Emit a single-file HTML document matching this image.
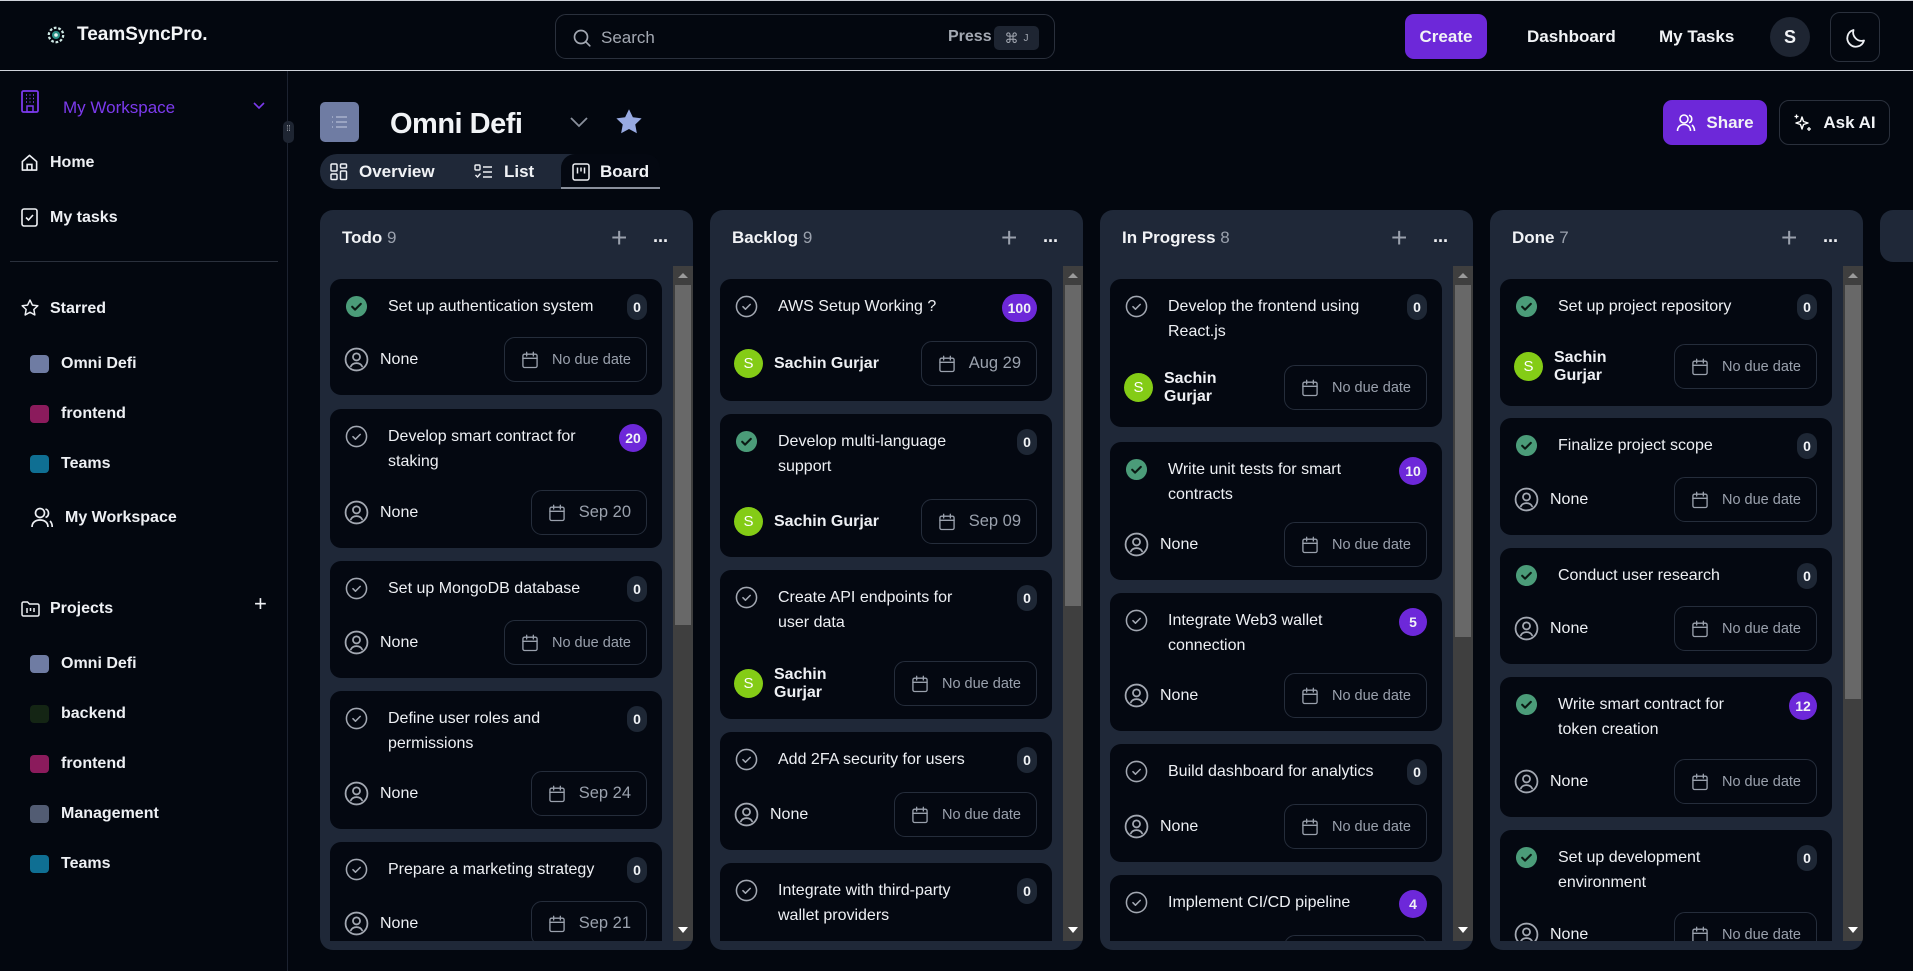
<!DOCTYPE html>
<html><head><meta charset="utf-8">
<style>
*{box-sizing:border-box;margin:0;padding:0}
body{width:1913px;height:971px;overflow:hidden;background:#03070f;font-family:"Liberation Sans",sans-serif;color:#f1f3f6;position:relative}
.abs{position:absolute}
.hdr{position:absolute;left:0;top:0;width:1913px;height:71px;border-top:1px solid #cfd3da;border-bottom:1px solid #cfd3da;background:#03070f}
.side{position:absolute;left:0;top:71px;width:288px;height:900px;border-right:1px solid #1c2230}
.si{position:absolute;display:flex;align-items:center;font-weight:bold;font-size:16px;color:#eef0f4}
.sq{width:19px;height:18px;border-radius:4px;margin-right:12px}
.col{position:absolute;top:210px;width:373px;height:740px;background:#1f2838;border-radius:13px;overflow:hidden}
.ch{position:absolute;left:22px;top:18px;font-size:17px;font-weight:bold}
.ch span{color:#9aa1ad;font-weight:normal}
.cards{position:absolute;left:10px;top:56px;width:333px;height:675px;overflow:hidden}
.sb{position:absolute;left:353px;top:56px;width:20px;height:675px;background:#3f3f3f}
.sb .th{position:absolute;left:2px;width:16px;background:#686868}
.card{position:absolute;left:0;width:332px;background:#040811;border-radius:11px}
.tr{position:absolute;top:15px;left:15px;right:15px;display:flex;align-items:flex-start}
.ck{width:23px;height:23px;margin-top:1px;flex:none}
.tt{margin-left:20px;flex:1;font-size:16px;line-height:25px;white-space:nowrap;color:#eef0f4}
.bd{flex:none;min-width:20px;height:26px;padding:0 6px;border-radius:13px;background:#1e2735;font-size:14px;font-weight:bold;display:flex;align-items:center;justify-content:center;margin-top:0}
.bd.p{background:#6d28d9;min-width:28px;height:28px;border-radius:14px}
.br{position:absolute;left:14px;right:15px;bottom:13px;height:45px;display:flex;align-items:center;justify-content:space-between}
.who{display:flex;align-items:center;font-size:16px;color:#eef0f4}
.who svg{margin-right:11px}
.av{width:29px;height:29px;border-radius:50%;background:#84cc16;color:#fff;font-size:15px;display:flex;align-items:center;justify-content:center;margin-right:11px;flex:none}
.nm{font-weight:bold;font-size:16px;line-height:18px}
.dt{height:45px;border:1px solid #252d3b;border-radius:11px;display:flex;align-items:center;padding:0 15px;color:#9aa1ad;font-size:14.5px}
.dt.b{font-size:16.5px}
.dt svg{margin-right:12px}
.pl{position:absolute;left:291px;top:12px;font-size:28px;color:#9aa1ad}
.dots{position:absolute;left:333px;top:21px;font-size:18px;font-weight:bold;color:#eef0f4;letter-spacing:-1px}
</style></head><body>
<svg width="0" height="0" style="position:absolute">
<defs>
<symbol id="okg" viewBox="0 0 24 24"><circle cx="12" cy="12" r="11" fill="#4b9c79"/><path d="M7.5 12.3l3 3 6-6" fill="none" stroke="#0b1a14" stroke-width="2.2" stroke-linecap="round" stroke-linejoin="round"/></symbol>
<symbol id="oko" viewBox="0 0 24 24"><circle cx="12" cy="12" r="10.5" fill="none" stroke="#a3a8b2" stroke-width="1.6"/><path d="M8.3 12.2l2.6 2.6 5-5" fill="none" stroke="#a3a8b2" stroke-width="1.6" stroke-linecap="round" stroke-linejoin="round"/></symbol>
<symbol id="per" viewBox="0 0 24 24"><circle cx="12" cy="12" r="10.5" fill="none" stroke="#a3a8b2" stroke-width="1.7"/><circle cx="12" cy="9.5" r="3.4" fill="none" stroke="#a3a8b2" stroke-width="1.7"/><path d="M6.3 19.2c1-2.6 3.2-3.7 5.7-3.7s4.7 1.1 5.7 3.7" fill="none" stroke="#a3a8b2" stroke-width="1.7"/></symbol>
<symbol id="cal" viewBox="0 0 24 24"><rect x="3.5" y="5" width="17" height="16" rx="2" fill="none" stroke="#9aa1ad" stroke-width="1.6"/><path d="M3.5 10h17M8 2.8v4.4M16 2.8v4.4" stroke="#9aa1ad" stroke-width="1.6" stroke-linecap="round"/></symbol>
</defs></svg>

<div class="hdr">
  <svg class="abs" style="left:47px;top:25px" width="18" height="18" viewBox="0 0 20 20"><circle cx="10" cy="10" r="8" fill="none" stroke="#cfe8e4" stroke-width="2.5" stroke-dasharray="3 2"/><circle cx="10" cy="10" r="4.5" fill="#2a8f86"/><circle cx="10" cy="10" r="2" fill="#e8f5f3"/></svg>
  <div class="abs" style="left:77px;top:23px;font-size:19px;font-weight:bold;color:#f4f5f7">TeamSyncPro.</div>
  <div class="abs" style="left:555px;top:13px;width:500px;height:45px;border:1px solid #2a303c;border-radius:11px">
    <svg class="abs" style="left:16px;top:13px" width="20" height="20" viewBox="0 0 20 20"><circle cx="9" cy="9" r="6.5" fill="none" stroke="#a3a8b2" stroke-width="1.7"/><path d="M13.8 13.8l4 4" stroke="#a3a8b2" stroke-width="1.7" stroke-linecap="round"/></svg>
    <div class="abs" style="left:45px;top:13px;font-size:17px;color:#a3a8b2">Search</div>
    <div class="abs" style="left:392px;top:13px;font-size:16px;font-weight:bold;color:#a3a8b2">Press</div>
    <div class="abs" style="left:438px;top:11px;width:45px;height:24px;background:#1e2532;border-radius:5px;color:#a3a8b2;font-size:14px;display:flex;align-items:center;justify-content:center">⌘ <span style="font-size:10px;margin-left:5px">J</span></div>
  </div>
  <div class="abs" style="left:1405px;top:13px;width:82px;height:45px;background:#6d28d9;border-radius:9px;font-size:17px;font-weight:bold;display:flex;align-items:center;justify-content:center">Create</div>
  <div class="abs" style="left:1527px;top:26px;font-size:17px;font-weight:bold">Dashboard</div>
  <div class="abs" style="left:1659px;top:26px;font-size:17px;font-weight:bold">My Tasks</div>
  <div class="abs" style="left:1770px;top:16px;width:40px;height:40px;border-radius:50%;background:#1e2532;font-weight:bold;font-size:18px;display:flex;align-items:center;justify-content:center">S</div>
  <div class="abs" style="left:1830px;top:11px;width:50px;height:50px;border:1px solid #2a303c;border-radius:10px"><svg class="abs" style="left:13px;top:13px" width="24" height="24" viewBox="0 0 24 24"><path d="M20 14.5A8.5 8.5 0 0 1 9.5 4a8.5 8.5 0 1 0 10.5 10.5z" fill="none" stroke="#eef0f4" stroke-width="1.8" stroke-linejoin="round"/></svg></div>
</div>

<div class="side">
  <svg class="abs" style="left:20px;top:19px" width="20" height="24" viewBox="0 0 20 24"><rect x="2" y="1" width="16" height="21" rx="1.5" fill="none" stroke="#7c3aed" stroke-width="1.8"/><path d="M6 5h1M9.5 5h1M13 5h1M6 8.5h1M9.5 8.5h1M13 8.5h1M6 12h1M9.5 12h1M13 12h1" stroke="#7c3aed" stroke-width="1.5"/><rect x="7" y="16" width="6" height="6" fill="none" stroke="#7c3aed" stroke-width="1.5"/></svg>
  <div class="si" style="left:63px;top:27px;color:#7c3aed;font-weight:normal;font-size:17px">My Workspace</div>
  <svg class="abs" style="left:252px;top:30px" width="14" height="10" viewBox="0 0 14 10"><path d="M2 2l5 5 5-5" fill="none" stroke="#7c3aed" stroke-width="1.6"/></svg>
  <div class="abs" style="left:283px;top:50px;width:11px;height:22px;background:#1e2532;border-radius:5px;color:#c0c4cc;font-size:8px;line-height:7px;text-align:center;padding-top:4px">⁞⁞</div>

  <svg class="abs" style="left:20px;top:82px" width="19" height="19" viewBox="0 0 20 20"><path d="M2.5 9L10 2.5 17.5 9v9h-15z" fill="none" stroke="#eef0f4" stroke-width="1.7" stroke-linejoin="round"/><path d="M7.5 18v-6h5v6" fill="none" stroke="#eef0f4" stroke-width="1.7"/></svg>
  <div class="si" style="left:50px;top:83px">Home</div>
  <svg class="abs" style="left:21px;top:137px" width="17" height="19" viewBox="0 0 17 19"><rect x="1" y="1" width="15" height="17" rx="2" fill="none" stroke="#eef0f4" stroke-width="1.6"/><path d="M5 9.5l2.5 2.5 4.5-5" fill="none" stroke="#eef0f4" stroke-width="1.6"/></svg>
  <div class="si" style="left:50px;top:138px">My tasks</div>
  <div class="abs" style="left:10px;top:190px;width:268px;height:1px;background:#2a303c"></div>
  <svg class="abs" style="left:20px;top:227px" width="20" height="20" viewBox="0 0 24 24"><path d="M12 2.5l2.9 6 6.5.8-4.8 4.5 1.2 6.5L12 17.1l-5.8 3.2 1.2-6.5-4.8-4.5 6.5-.8z" fill="none" stroke="#eef0f4" stroke-width="1.8" stroke-linejoin="round"/></svg>
  <div class="si" style="left:50px;top:229px">Starred</div>
  <div class="si" style="left:30px;top:284px"><span class="sq" style="background:#6f7ca3"></span>Omni Defi</div>
  <div class="si" style="left:30px;top:334px"><span class="sq" style="background:#8b1b5c"></span>frontend</div>
  <div class="si" style="left:30px;top:384px"><span class="sq" style="background:#0f6f93"></span>Teams</div>
  <svg class="abs" style="left:30px;top:436px" width="24" height="22" viewBox="0 0 24 22"><circle cx="10" cy="6" r="4.5" fill="none" stroke="#eef0f4" stroke-width="1.7"/><path d="M2 20c0-4.5 3.5-7 8-7s8 2.5 8 7" fill="none" stroke="#eef0f4" stroke-width="1.7"/><path d="M15.5 2a4.5 4.5 0 0 1 0 8.5M20 14c1.5 1.3 2.2 3.5 2.2 6" fill="none" stroke="#eef0f4" stroke-width="1.7"/></svg>
  <div class="si" style="left:65px;top:438px">My Workspace</div>
  <svg class="abs" style="left:21px;top:530px" width="19" height="16" viewBox="0 0 19 16"><path d="M1 2.5a1.5 1.5 0 0 1 1.5-1.5h4l2 2h8a1.5 1.5 0 0 1 1.5 1.5v9a1.5 1.5 0 0 1-1.5 1.5h-14A1.5 1.5 0 0 1 1 13.5z" fill="none" stroke="#eef0f4" stroke-width="1.5"/><path d="M6 7v5M9.5 7v3M13 7v4" stroke="#eef0f4" stroke-width="1.5"/></svg>
  <div class="si" style="left:50px;top:529px">Projects</div>
  <div class="abs" style="left:254px;top:520px;font-size:22px;color:#eef0f4">+</div>
  <div class="si" style="left:30px;top:584px"><span class="sq" style="background:#6f7ca3"></span>Omni Defi</div>
  <div class="si" style="left:30px;top:634px"><span class="sq" style="background:#142514"></span>backend</div>
  <div class="si" style="left:30px;top:684px"><span class="sq" style="background:#8b1b5c"></span>frontend</div>
  <div class="si" style="left:30px;top:734px"><span class="sq" style="background:#525c73"></span>Management</div>
  <div class="si" style="left:30px;top:784px"><span class="sq" style="background:#0f6f93"></span>Teams</div>
</div>

<div class="abs" style="left:320px;top:102px;width:39px;height:40px;background:#6f7ca3;border-radius:5px"><svg class="abs" style="left:11px;top:13px" width="18" height="14" viewBox="0 0 18 14"><path d="M1 2h1M5 2h11M1 7h1M5 7h11M1 12h1M5 12h11" stroke="#a8b2cc" stroke-width="1.5"/></svg></div>
<div class="abs" style="left:390px;top:108px;font-size:29px;font-weight:bold;letter-spacing:-0.5px">Omni Defi</div>
<svg class="abs" style="left:569px;top:116px" width="20" height="12" viewBox="0 0 20 12"><path d="M2 2l8 8 8-8" fill="none" stroke="#8a909c" stroke-width="1.8"/></svg>
<svg class="abs" style="left:614px;top:107px" width="30" height="30" viewBox="0 0 24 24"><path d="M12 1.8l3.1 6.4 7 .9-5.1 4.9 1.3 7-6.3-3.4-6.3 3.4 1.3-7L1.9 9.1l7-.9z" fill="#98aae2"/></svg>
<div class="abs" style="left:320px;top:154px;width:340px;height:35px;background:#1f2838;border-radius:17px"></div>
<div class="abs" style="left:561px;top:154px;width:99px;height:35px;background:#040811;border-radius:14px 14px 0 0;border-bottom:2px solid #8a909c"></div>
<svg class="abs" style="left:330px;top:163px" width="18" height="18" viewBox="0 0 18 18"><g fill="none" stroke="#eef0f4" stroke-width="1.5"><rect x="1" y="1" width="6" height="7" rx="1"/><rect x="10.5" y="1" width="6" height="4" rx="1"/><rect x="1" y="11" width="6" height="5.5" rx="1"/><rect x="10.5" y="8" width="6" height="8.5" rx="1"/></g></svg>
<div class="abs" style="left:359px;top:162px;font-size:17px;font-weight:bold">Overview</div>
<svg class="abs" style="left:474px;top:164px" width="19" height="16" viewBox="0 0 19 16"><g fill="none" stroke="#eef0f4" stroke-width="1.4"><rect x="1" y="1" width="5" height="5" rx="1"/><path d="M1.5 11l2 2 3-3.5M9 3h9M9 8h9M9 13h9"/></g></svg>
<div class="abs" style="left:504px;top:162px;font-size:17px;font-weight:bold">List</div>
<svg class="abs" style="left:572px;top:163px" width="18" height="18" viewBox="0 0 18 18"><g fill="none" stroke="#eef0f4" stroke-width="1.5"><rect x="1" y="1" width="16" height="16" rx="2"/><path d="M5.5 4.5v6M9 4.5v4M12.5 4.5v6"/></g></svg>
<div class="abs" style="left:600px;top:162px;font-size:17px;font-weight:bold">Board</div>

<div class="abs" style="left:1663px;top:100px;width:104px;height:45px;background:#6d28d9;border-radius:9px;display:flex;align-items:center;justify-content:center;font-size:17px;font-weight:bold"><svg width="20" height="20" viewBox="0 0 20 20" style="margin-right:10px"><circle cx="8" cy="6" r="4" fill="none" stroke="#fff" stroke-width="1.6"/><path d="M1.5 18c0-4 2.8-6.5 6.5-6.5s6.5 2.5 6.5 6.5M13 2.2a4 4 0 0 1 0 7.6M16 12c1.5 1.3 2.5 3.3 2.5 6" fill="none" stroke="#fff" stroke-width="1.6"/></svg>Share</div>
<div class="abs" style="left:1779px;top:100px;width:111px;height:45px;border:1px solid #2a303c;border-radius:10px;display:flex;align-items:center;justify-content:center;font-size:17px;font-weight:bold"><svg width="20" height="20" viewBox="0 0 20 20" style="margin-right:10px"><path d="M9 4l1.5 4.5L15 10l-4.5 1.5L9 16l-1.5-4.5L3 10l4.5-1.5z" fill="none" stroke="#fff" stroke-width="1.4" stroke-linejoin="round"/><path d="M3.5 1.5v4M1.5 3.5h4M16 14v4M14 16h4" stroke="#fff" stroke-width="1.3"/></svg>Ask AI</div>

<div class="col" style="left:320px">
  <div class="ch">Todo <span>9</span></div>
  <div class="pl">+</div><div class="dots">···</div>
  <div class="cards">
    <div class="card" style="top:13px;height:116px"><div class="tr"><svg class="ck"><use href="#okg"/></svg><div class="tt">Set up authentication system</div><span class="bd">0</span></div><div class="br"><div class="who"><svg width="25" height="25"><use href="#per"/></svg>None</div><div class="dt"><svg width="20" height="20"><use href="#cal"/></svg>No due date</div></div></div>
    <div class="card" style="top:143px;height:139px"><div class="tr"><svg class="ck"><use href="#oko"/></svg><div class="tt">Develop smart contract for<br>staking</div><span class="bd p">20</span></div><div class="br"><div class="who"><svg width="25" height="25"><use href="#per"/></svg>None</div><div class="dt b"><svg width="20" height="20"><use href="#cal"/></svg>Sep 20</div></div></div>
    <div class="card" style="top:295px;height:117px"><div class="tr"><svg class="ck"><use href="#oko"/></svg><div class="tt">Set up MongoDB database</div><span class="bd">0</span></div><div class="br"><div class="who"><svg width="25" height="25"><use href="#per"/></svg>None</div><div class="dt"><svg width="20" height="20"><use href="#cal"/></svg>No due date</div></div></div>
    <div class="card" style="top:425px;height:138px"><div class="tr"><svg class="ck"><use href="#oko"/></svg><div class="tt">Define user roles and<br>permissions</div><span class="bd">0</span></div><div class="br"><div class="who"><svg width="25" height="25"><use href="#per"/></svg>None</div><div class="dt b"><svg width="20" height="20"><use href="#cal"/></svg>Sep 24</div></div></div>
    <div class="card" style="top:576px;height:117px"><div class="tr"><svg class="ck"><use href="#oko"/></svg><div class="tt">Prepare a marketing strategy</div><span class="bd">0</span></div><div class="br"><div class="who"><svg width="25" height="25"><use href="#per"/></svg>None</div><div class="dt b"><svg width="20" height="20"><use href="#cal"/></svg>Sep 21</div></div></div>
  </div>
  <div class="sb"><div class="abs" style="left:5px;top:7px;border:5px solid transparent;border-bottom:5px solid #9a9a9a;border-top:0"></div><div class="th" style="top:19px;height:340px"></div><div class="abs" style="left:5px;top:661px;border:5px solid transparent;border-top:6px solid #fff;border-bottom:0"></div></div>
</div>

<div class="col" style="left:710px">
  <div class="ch">Backlog <span>9</span></div>
  <div class="pl">+</div><div class="dots">···</div>
  <div class="cards">
    <div class="card" style="top:13px;height:122px"><div class="tr"><svg class="ck"><use href="#oko"/></svg><div class="tt">AWS Setup Working ?</div><span class="bd p">100</span></div><div class="br" style="bottom:15px"><div class="who"><span class="av">S</span><span class="nm">Sachin Gurjar</span></div><div class="dt b"><svg width="20" height="20"><use href="#cal"/></svg>Aug 29</div></div></div>
    <div class="card" style="top:148px;height:143px"><div class="tr"><svg class="ck"><use href="#okg"/></svg><div class="tt">Develop multi-language<br>support</div><span class="bd">0</span></div><div class="br"><div class="who"><span class="av">S</span><span class="nm">Sachin Gurjar</span></div><div class="dt b"><svg width="20" height="20"><use href="#cal"/></svg>Sep 09</div></div></div>
    <div class="card" style="top:304px;height:149px"><div class="tr"><svg class="ck"><use href="#oko"/></svg><div class="tt">Create API endpoints for<br>user data</div><span class="bd">0</span></div><div class="br"><div class="who"><span class="av">S</span><span class="nm">Sachin<br>Gurjar</span></div><div class="dt"><svg width="20" height="20"><use href="#cal"/></svg>No due date</div></div></div>
    <div class="card" style="top:466px;height:118px"><div class="tr"><svg class="ck"><use href="#oko"/></svg><div class="tt">Add 2FA security for users</div><span class="bd">0</span></div><div class="br"><div class="who"><svg width="25" height="25"><use href="#per"/></svg>None</div><div class="dt"><svg width="20" height="20"><use href="#cal"/></svg>No due date</div></div></div>
    <div class="card" style="top:597px;height:140px"><div class="tr"><svg class="ck"><use href="#oko"/></svg><div class="tt">Integrate with third-party<br>wallet providers</div><span class="bd">0</span></div></div>
  </div>
  <div class="sb"><div class="abs" style="left:5px;top:7px;border:5px solid transparent;border-bottom:5px solid #9a9a9a;border-top:0"></div><div class="th" style="top:19px;height:321px"></div><div class="abs" style="left:5px;top:661px;border:5px solid transparent;border-top:6px solid #fff;border-bottom:0"></div></div>
</div>

<div class="col" style="left:1100px">
  <div class="ch">In Progress <span>8</span></div>
  <div class="pl">+</div><div class="dots">···</div>
  <div class="cards">
    <div class="card" style="top:13px;height:148px"><div class="tr"><svg class="ck"><use href="#oko"/></svg><div class="tt">Develop the frontend using<br>React.js</div><span class="bd">0</span></div><div class="br" style="bottom:17px"><div class="who"><span class="av">S</span><span class="nm">Sachin<br>Gurjar</span></div><div class="dt"><svg width="20" height="20"><use href="#cal"/></svg>No due date</div></div></div>
    <div class="card" style="top:176px;height:138px"><div class="tr"><svg class="ck"><use href="#okg"/></svg><div class="tt">Write unit tests for smart<br>contracts</div><span class="bd p">10</span></div><div class="br"><div class="who"><svg width="25" height="25"><use href="#per"/></svg>None</div><div class="dt"><svg width="20" height="20"><use href="#cal"/></svg>No due date</div></div></div>
    <div class="card" style="top:327px;height:138px"><div class="tr"><svg class="ck"><use href="#oko"/></svg><div class="tt">Integrate Web3 wallet<br>connection</div><span class="bd p">5</span></div><div class="br"><div class="who"><svg width="25" height="25"><use href="#per"/></svg>None</div><div class="dt"><svg width="20" height="20"><use href="#cal"/></svg>No due date</div></div></div>
    <div class="card" style="top:478px;height:118px"><div class="tr"><svg class="ck"><use href="#oko"/></svg><div class="tt">Build dashboard for analytics</div><span class="bd">0</span></div><div class="br"><div class="who"><svg width="25" height="25"><use href="#per"/></svg>None</div><div class="dt"><svg width="20" height="20"><use href="#cal"/></svg>No due date</div></div></div>
    <div class="card" style="top:609px;height:118px"><div class="tr"><svg class="ck"><use href="#oko"/></svg><div class="tt">Implement CI/CD pipeline</div><span class="bd p">4</span></div><div class="br"><div></div><div class="dt"><svg width="20" height="20"><use href="#cal"/></svg>No due date</div></div></div>
  </div>
  <div class="sb"><div class="abs" style="left:5px;top:7px;border:5px solid transparent;border-bottom:5px solid #9a9a9a;border-top:0"></div><div class="th" style="top:19px;height:352px"></div><div class="abs" style="left:5px;top:661px;border:5px solid transparent;border-top:6px solid #fff;border-bottom:0"></div></div>
</div>

<div class="col" style="left:1490px">
  <div class="ch">Done <span>7</span></div>
  <div class="pl">+</div><div class="dots">···</div>
  <div class="cards">
    <div class="card" style="top:13px;height:127px"><div class="tr"><svg class="ck"><use href="#okg"/></svg><div class="tt">Set up project repository</div><span class="bd">0</span></div><div class="br" style="bottom:17px"><div class="who"><span class="av">S</span><span class="nm">Sachin<br>Gurjar</span></div><div class="dt"><svg width="20" height="20"><use href="#cal"/></svg>No due date</div></div></div>
    <div class="card" style="top:152px;height:117px"><div class="tr"><svg class="ck"><use href="#okg"/></svg><div class="tt">Finalize project scope</div><span class="bd">0</span></div><div class="br"><div class="who"><svg width="25" height="25"><use href="#per"/></svg>None</div><div class="dt"><svg width="20" height="20"><use href="#cal"/></svg>No due date</div></div></div>
    <div class="card" style="top:282px;height:116px"><div class="tr"><svg class="ck"><use href="#okg"/></svg><div class="tt">Conduct user research</div><span class="bd">0</span></div><div class="br"><div class="who"><svg width="25" height="25"><use href="#per"/></svg>None</div><div class="dt"><svg width="20" height="20"><use href="#cal"/></svg>No due date</div></div></div>
    <div class="card" style="top:411px;height:140px"><div class="tr"><svg class="ck"><use href="#okg"/></svg><div class="tt">Write smart contract for<br>token creation</div><span class="bd p">12</span></div><div class="br"><div class="who"><svg width="25" height="25"><use href="#per"/></svg>None</div><div class="dt"><svg width="20" height="20"><use href="#cal"/></svg>No due date</div></div></div>
    <div class="card" style="top:564px;height:140px"><div class="tr"><svg class="ck"><use href="#okg"/></svg><div class="tt">Set up development<br>environment</div><span class="bd">0</span></div><div class="br"><div class="who"><svg width="25" height="25"><use href="#per"/></svg>None</div><div class="dt"><svg width="20" height="20"><use href="#cal"/></svg>No due date</div></div></div>
  </div>
  <div class="sb"><div class="abs" style="left:5px;top:7px;border:5px solid transparent;border-bottom:5px solid #9a9a9a;border-top:0"></div><div class="th" style="top:19px;height:414px"></div><div class="abs" style="left:5px;top:661px;border:5px solid transparent;border-top:6px solid #fff;border-bottom:0"></div></div>
</div>

<div class="abs" style="left:1880px;top:210px;width:40px;height:52px;background:#1f2838;border-radius:13px 0 0 13px"></div>
</body></html>
